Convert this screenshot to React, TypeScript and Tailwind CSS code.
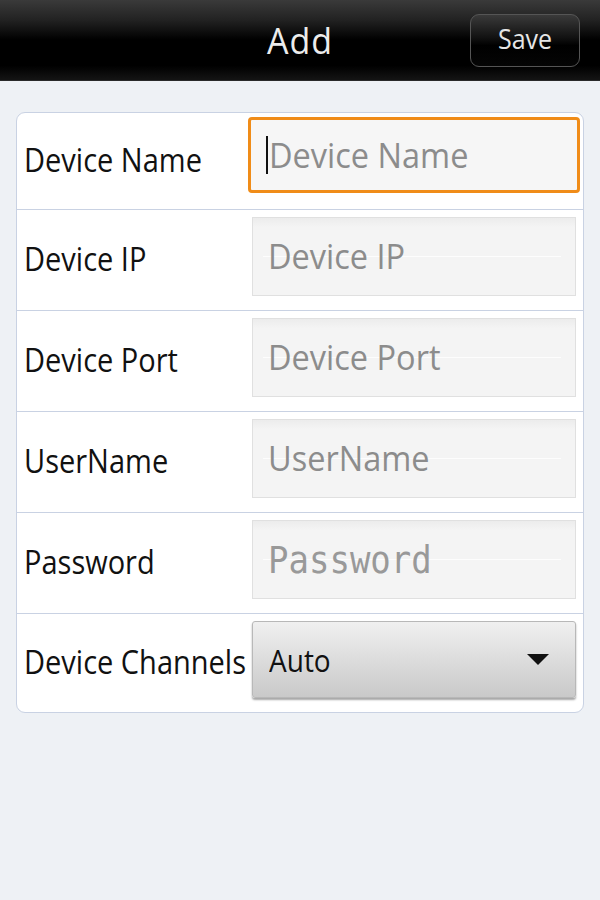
import React from 'react';

const fields = [
  { label: 'Device Name', placeholder: 'Device Name' },
  { label: 'Device IP', placeholder: 'Device IP' },
  { label: 'Device Port', placeholder: 'Device Port' },
  { label: 'UserName', placeholder: 'UserName' },
  { label: 'Password', placeholder: 'Password', mono: true },
];

const Label: React.FC<{ text: string; first?: boolean }> = ({ text, first }) => (
  <span className={`w-[228px] self-center ${first ? 'pb-[4px]' : 'pb-[7px]'}`}>
    <span className="inline-block scale-y-[1.1] text-[29px] leading-none text-[#111] whitespace-nowrap">{text}</span>
  </span>
);

const App: React.FC = () => {
  return (
    <div className="w-[600px] h-[900px] bg-[#eef1f5] font-['Open_Sans',sans-serif]">
      {/* title bar */}
      <div className="relative h-[81px] bg-[linear-gradient(#3a3a3a_0%,#222_25%,#000_50%,#000_82%,#141414_100%)] border-b border-[#2a2a2a] flex items-center justify-center">
        <span className="inline-block scale-y-[1.08] text-[34px] text-[#ececec] tracking-[1px]">Add</span>
        <button className="absolute right-[20px] top-[14px] w-[110px] h-[53px] rounded-[9px] border border-[#555] bg-[linear-gradient(#3a3a3a,#111_45%,#000_60%,#050505)] text-[#e6e6e6] text-[25px] leading-none pb-[4px]">
          <span className="inline-block scale-y-[1.08]">Save</span>
        </button>
      </div>

      <div className="px-[16px] pt-[31px]">
        <div className="rounded-[9px] border border-[#c9d2e3] bg-white overflow-hidden">
          {fields.map((f, i) => (
            <div
              key={f.label}
              className={`flex items-start pl-[7px] pr-[7px] ${i === 0 ? 'h-[96px] pt-[4px]' : 'h-[101px] pt-[7px] border-t border-[#c9d2e3]'}`}
            >
              <Label text={f.label} first={i === 0} />
              {i === 0 ? (
                <div className="flex-1 h-[76px] mr-[-4px] ml-[-4px] rounded-[4px] border-[3px] border-[#f08c18] bg-[#f6f6f6] flex items-center pl-[15px]">
                  <span className="w-[2px] h-[38px] bg-[#111] mr-[1px]" />
                  <span className="inline-block scale-y-[1.07] text-[32.5px] leading-none text-[#8c8c8c]">{f.placeholder}</span>
                </div>
              ) : (
                <div className="relative flex-1 h-[79px] border border-[#e0e0e0] bg-[linear-gradient(#ececec,#f4f4f4_12%,#f4f4f4)] flex items-center pl-[15px]">
                  <div className="absolute left-[10px] right-[14px] top-[38px] h-px bg-white/80" />
                  <span
                    className={`relative inline-block scale-y-[1.07] leading-none ${f.mono ? "font-['DejaVu_Sans_Mono',monospace] text-[34px] text-[#999]" : 'text-[32.5px] text-[#8c8c8c]'}`}
                  >
                    {f.placeholder}
                  </span>
                </div>
              )}
            </div>
          ))}
          <div className="flex items-start pl-[7px] pr-[7px] pt-[7px] h-[99px] border-t border-[#c9d2e3]">
            <Label text="Device Channels" />
            <div className="flex-1 h-[77px] rounded-[3px] bg-[linear-gradient(#f0f0f0,#c9c9c9)] border border-[#b8b8b8] shadow-[0_2px_2px_rgba(0,0,0,0.35)] flex items-center justify-between pl-[16px] pr-[26px]">
              <span className="inline-block scale-y-[1.1] text-[28px] leading-none text-[#111]">Auto</span>
              <svg width="22" height="11" viewBox="0 0 22 11">
                <polygon points="0,0 22,0 11,11" fill="#111" />
              </svg>
            </div>
          </div>
        </div>
      </div>
    </div>
  );
};

export default App;
